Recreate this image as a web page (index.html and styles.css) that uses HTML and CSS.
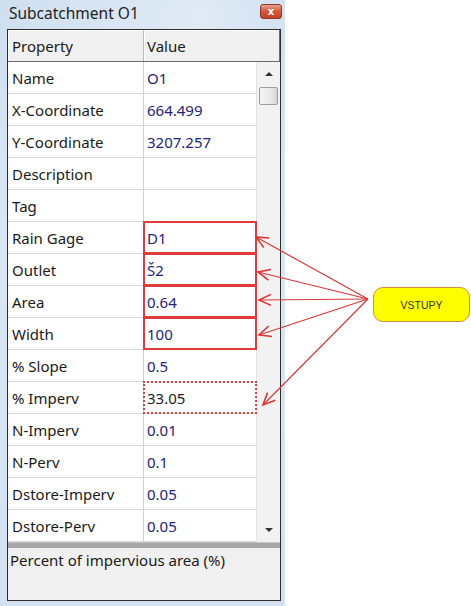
FILE: index.html
```html
<!DOCTYPE html>
<html>
<head>
<meta charset="utf-8">
<link rel="stylesheet" href="styles.css">
</head>
<body>
<div class="window">
  <div class="titlebar">
    <span class="title">Subcatchment O1</span>
    <span class="close">x</span>
  </div>
  <div class="panel">
    <div class="header">
      <div class="hcell hprop">Property</div>
      <div class="hcell hval">Value</div>
    </div>
    <div class="body">
      <div class="rows">
        <div class="row"><div class="prop">Name</div><div class="val">O1</div></div>
        <div class="row"><div class="prop">X-Coordinate</div><div class="val">664.499</div></div>
        <div class="row"><div class="prop">Y-Coordinate</div><div class="val">3207.257</div></div>
        <div class="row"><div class="prop">Description</div><div class="val"></div></div>
        <div class="row"><div class="prop">Tag</div><div class="val"></div></div>
        <div class="row"><div class="prop">Rain Gage</div><div class="val marked">D1</div></div>
        <div class="row"><div class="prop">Outlet</div><div class="val marked">Š2</div></div>
        <div class="row"><div class="prop">Area</div><div class="val marked">0.64</div></div>
        <div class="row"><div class="prop">Width</div><div class="val marked">100</div></div>
        <div class="row"><div class="prop">% Slope</div><div class="val">0.5</div></div>
        <div class="row"><div class="prop">% Imperv</div><div class="val marked dotted selected">33.05</div></div>
        <div class="row"><div class="prop">N-Imperv</div><div class="val">0.01</div></div>
        <div class="row"><div class="prop">N-Perv</div><div class="val">0.1</div></div>
        <div class="row"><div class="prop">Dstore-Imperv</div><div class="val">0.05</div></div>
        <div class="row"><div class="prop">Dstore-Perv</div><div class="val">0.05</div></div>
      </div>
      <div class="scrollbar">
        <div class="arrow up"></div>
        <div class="thumb"></div>
        <div class="track"></div>
        <div class="arrow down"></div>
      </div>
    </div>
    <div class="splitter"></div>
    <div class="status">Percent of impervious area (%)</div>
  </div>
</div>

<div class="callout">VSTUPY</div>

<svg class="annot" width="471" height="606" viewBox="0 0 471 606">
  <defs>
    <marker id="ah" viewBox="-14 -8 16 16" markerWidth="16" markerHeight="16" refX="0" refY="0" markerUnits="userSpaceOnUse" orient="auto">
      <path d="M-12,-5.5 L0,0 L-12,5.5" fill="none" stroke="#dd3333" stroke-width="1.6"/>
    </marker>
  </defs>
  <g stroke="#d63a3a" stroke-width="1.2" fill="none" marker-end="url(#ah)">
    <line x1="368" y1="299" x2="256" y2="237"/>
    <line x1="368" y1="299" x2="258" y2="272"/>
    <line x1="368" y1="299" x2="259" y2="300"/>
    <line x1="368" y1="299" x2="259" y2="335"/>
    <line x1="368" y1="299" x2="263" y2="405"/>
  </g>
</svg>
</body>
</html>
```
FILE: styles.css
```css
html, body {
  margin: 0;
  padding: 0;
  background: #ffffff;
}
body {
  width: 471px;
  height: 606px;
  position: relative;
  overflow: hidden;
  font-family: "Noto Sans", "Open Sans", sans-serif;
  font-size: 15px;
}
.window {
  width: 285px;
  height: 606px;
  box-sizing: border-box;
  padding: 0 4px 5px 7px;
  background: linear-gradient(180deg, #cfdff0 0%, #d9e6f4 40%, #d3e1f1 100%);
  display: flex;
  flex-direction: column;
}
.titlebar {
  height: 29px;
  display: flex;
  align-items: flex-start;
  justify-content: space-between;
  background: linear-gradient(90deg, rgba(255,255,255,0) 0%, rgba(255,255,255,0.35) 70%, rgba(255,255,255,0.1) 100%);
  margin: 0 -4px 0 -7px;
  padding: 0 3px 0 9px;
}
.title {
  font-size: 15.5px;
  color: #1e1e1e;
  margin-top: 3px;
  line-height: 20px;
}
.close {
  width: 22px;
  height: 15px;
  margin-top: 4px;
  border-radius: 3px;
  border: 1px solid #8a3a2a;
  background: linear-gradient(180deg, #e9a08c 0%, #d4583c 50%, #c44226 100%);
  color: #ffffff;
  font-family: "DejaVu Sans", sans-serif;
  font-weight: bold;
  font-size: 10px;
  line-height: 13px;
  text-align: center;
  box-sizing: border-box;
}
.panel {
  width: 274px;
  height: 572px;
  box-sizing: border-box;
  border: 1px solid #2c2c2c;
  background: #f0f0f0;
  display: flex;
  flex-direction: column;
}
.header {
  height: 32px;
  display: flex;
  box-sizing: border-box;
  border-bottom: 1px solid #6a6a6a;
  border-right: 1px solid #6a6a6a;
  background: #f0f0f0;
}
.hcell {
  box-sizing: border-box;
  border-top: 1px solid #ffffff;
  border-left: 1px solid #ffffff;
  padding-left: 3px;
  color: #1a1a1a;
  line-height: 30px;
}
.hprop {
  width: 136px;
  border-right: 1px solid #b8b8b8;
}
.hval {
  flex: 1;
  padding-left: 2px;
}
.body {
  display: flex;
  height: 480px;
}
.rows {
  width: 248px;
  background: #ffffff;
  display: flex;
  flex-direction: column;
}
.row {
  height: 32px;
  display: flex;
  box-sizing: border-box;
  border-bottom: 1px solid #d6d6d6;
}
.prop {
  width: 136px;
  box-sizing: border-box;
  border-right: 1px solid #cfcfcf;
  padding-left: 4px;
  color: #1a1a1a;
  line-height: 32px;
}
.val {
  flex: 1;
  padding-left: 3px;
  color: #23237a;
  line-height: 32px;
  box-sizing: border-box;
}
.marked {
  outline: 2px solid #e03a3a;
  outline-offset: -1px;
  position: relative;
}
.dotted {
  outline: 2px dotted #d84444;
}
.selected {
  color: #1a1a1a;
}
.scrollbar {
  flex: 1;
  display: flex;
  flex-direction: column;
  align-items: center;
  background: #f2f2f2;
  border-left: 1px solid #e2e2e2;
}
.arrow {
  width: 0;
  height: 0;
  border-left: 4px solid transparent;
  border-right: 4px solid transparent;
}
.up {
  margin-top: 10px;
  border-bottom: 4px solid #333333;
}
.down {
  margin-bottom: 10px;
  border-top: 4px solid #333333;
}
.thumb {
  margin-top: 11px;
  width: 19px;
  height: 18px;
  box-sizing: border-box;
  border: 1px solid #9c9c9c;
  border-radius: 2px;
  background: linear-gradient(90deg, #f4f4f4 0%, #e8e8e8 60%, #d6d6d6 100%);
}
.track {
  flex: 1;
}
.splitter {
  height: 6px;
  background: #a8a8a8;
  border-top: 1px solid #c4c4c4;
  box-sizing: border-box;
}
.status {
  flex: 1;
  padding: 2px 0 0 2px;
  line-height: 20px;
  color: #1a1a1a;
  background: #f0f0f0;
}
.callout {
  position: absolute;
  left: 373px;
  top: 287px;
  width: 97px;
  height: 35px;
  box-sizing: border-box;
  border: 1px solid #d98a3a;
  border-radius: 10px;
  background: #ffff00;
  color: #333333;
  font-family: "Liberation Sans", sans-serif;
  font-size: 10.5px;
  line-height: 35px;
  text-align: center;
}
.annot {
  position: absolute;
  left: 0;
  top: 0;
  pointer-events: none;
}
```
